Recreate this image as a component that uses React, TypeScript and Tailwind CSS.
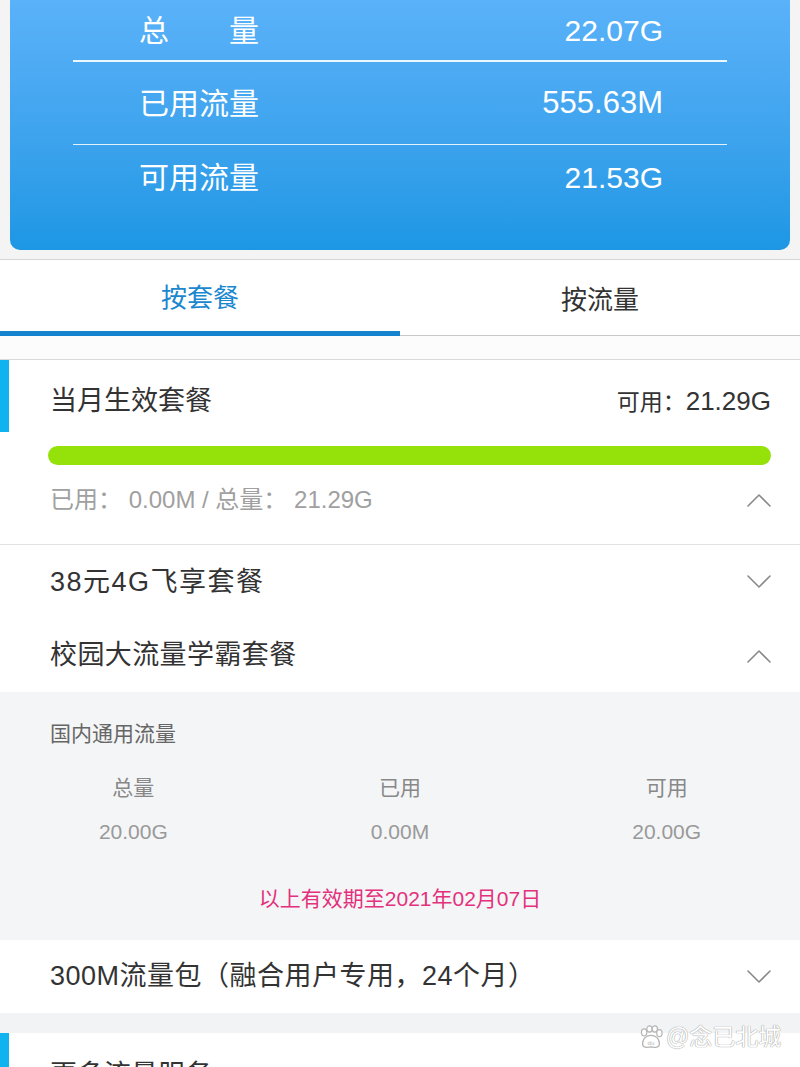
import React from "react";

const font = "font-['Liberation_Sans','Noto_Sans_CJK_SC',sans-serif]";

function Chevron({ up }: { up?: boolean }) {
  return (
    <svg width="24" height="14" viewBox="0 0 24 14" className="shrink-0">
      <polyline
        points={up ? "1,13 12,2 23,13" : "1,1 12,12 23,1"}
        fill="none"
        stroke="#8a8a8a"
        strokeWidth="1.6"
        strokeLinecap="round"
        strokeLinejoin="round"
      />
    </svg>
  );
}

function Paw() {
  return (
    <svg width="26" height="26" viewBox="0 0 34 30" className="shrink-0">
      <g fill="#ffffff" stroke="#b5b5b5" strokeWidth="1.6">
        <ellipse cx="8" cy="9" rx="3.5" ry="4.5" />
        <ellipse cx="15" cy="4.5" rx="3.5" ry="4" />
        <ellipse cx="22" cy="4.5" rx="3.5" ry="4" />
        <ellipse cx="28" cy="10" rx="3.5" ry="4.5" />
        <path d="M6 24 C6 16 12 13 17 13 C22 13 28 16 28 24 C28 29 22 29 17 28 C12 29 6 29 6 24 Z" />
      </g>
      <text x="17" y="25" textAnchor="middle" fontSize="8" fill="#b5b5b5" fontFamily="Liberation Sans, sans-serif">du</text>
    </svg>
  );
}

const summary = [
  { label: "总　　量", value: "22.07G" },
  { label: "已用流量", value: "555.63M" },
  { label: "可用流量", value: "21.53G" },
];

export default function App() {
  return (
    <div className={"relative w-[800px] h-[1067px] overflow-hidden bg-[#f4f4f4] " + font}>
      {/* blue summary card */}
      <div className="mx-[10px] rounded-b-[10px] bg-linear-to-b from-[#5ab2f9] to-[#1c97e4] pb-[41px]">
        <div className="mx-[63px] text-white">
          <div className="flex h-[60px] items-center justify-between pl-[66px] pr-[64px] text-[30px]">
            <span>{summary[0].label}</span>
            <span>{summary[0].value}</span>
          </div>
          <div className="h-[2px] bg-white/90" />
          <div className="flex h-[82px] items-center justify-between pl-[66px] pr-[64px] text-[30px]">
            <span>{summary[1].label}</span>
            <span className="text-[31px]">{summary[1].value}</span>
          </div>
          <div className="h-px bg-white/85" />
          <div className="flex h-[64px] items-center justify-between pl-[66px] pr-[64px] text-[30px]">
            <span>{summary[2].label}</span>
            <span>{summary[2].value}</span>
          </div>
        </div>
      </div>

      {/* tabs */}
      <div className="mt-[9px] flex h-[77px] border-t border-[#d6d6d6] bg-white">
        <div className="flex flex-1 flex-col">
          <div className="flex flex-1 items-center justify-center pt-[6px] text-[26px] text-[#1a87cf]">按套餐</div>
          <div className="h-[5px] bg-[#1683cf]" />
        </div>
        <div className="flex flex-1 flex-col">
          <div className="flex flex-1 items-center justify-center pt-[6px] text-[26px] text-[#333]">按流量</div>
          <div className="h-px bg-[#c8c8c8]" />
        </div>
      </div>
      <div className="h-[24px] border-b border-[#d9d9d9] bg-[#fcfcfc]" />

      {/* current month */}
      <div className="relative border-b border-[#e2e2e2] bg-white pl-[48px] pr-[29px] pt-[25px] pb-[30px]">
        <div className="absolute left-0 top-0 h-[72px] w-[9px] bg-[#0fb3ef]" />
        <div className="flex h-[32px] items-center justify-between">
          <span className="pl-[2px] text-[27px] text-[#333]">当月生效套餐</span>
          <span className="flex items-baseline text-[#333]">
            <span className="text-[23px]">可用：</span>
            <span className="text-[26px]">21.29G</span>
          </span>
        </div>
        <div className="mt-[29px] h-[19px] rounded-full bg-[#95e20b]" />
        <div className="mt-[21px] flex h-[28px] items-center justify-between">
          <span className="pl-[2px] text-[24px] text-[#a0a0a0]">已用： 0.00M / 总量： 21.29G</span>
          <Chevron up />
        </div>
      </div>

      <div className="bg-white pl-[50px] pr-[29px]">
        <div className="flex h-[74px] items-center justify-between">
          <span className="text-[27px] tracking-[1.5px] text-[#333]">38元4G飞享套餐</span>
          <Chevron />
        </div>
        <div className="flex h-[73px] items-center justify-between">
          <span className="text-[27px] tracking-[0.4px] text-[#333]">校园大流量学霸套餐</span>
          <Chevron up />
        </div>
      </div>

      {/* expanded package */}
      <div className="bg-[#f4f5f7] pt-[28px] pb-[27px]">
        <div className="flex h-[28px] items-center pl-[50px] text-[21px] text-[#666]">国内通用流量</div>
        <div className="mt-[26px] grid grid-cols-3 text-center text-[21px]">
          <div className="flex flex-col">
            <span className="h-[28px] leading-[28px] text-[#888]">总量</span>
            <span className="mt-[16px] h-[28px] leading-[28px] text-[#999]">20.00G</span>
          </div>
          <div className="flex flex-col">
            <span className="h-[28px] leading-[28px] text-[#888]">已用</span>
            <span className="mt-[16px] h-[28px] leading-[28px] text-[#999]">0.00M</span>
          </div>
          <div className="flex flex-col">
            <span className="h-[28px] leading-[28px] text-[#888]">可用</span>
            <span className="mt-[16px] h-[28px] leading-[28px] text-[#999]">20.00G</span>
          </div>
        </div>
        <div className="mt-[39px] h-[28px] text-center text-[21px] leading-[28px] text-[#e3317c]">
          以上有效期至2021年02月07日
        </div>
      </div>

      <div className="flex h-[73px] items-center justify-between bg-white pl-[50px] pr-[29px]">
        <span className="text-[27px] tracking-[0.5px] text-[#333]">300M流量包（融合用户专用，24个月）</span>
        <Chevron />
      </div>
      <div className="h-[20px] bg-[#f2f3f5]" />

      {/* more services */}
      <div className="relative h-[120px] bg-white pl-[50px] pt-[22px]">
        <div className="absolute left-0 top-0 h-[72px] w-[9px] bg-[#0fb3ef]" />
        <span className="text-[27px] text-[#333]">更多流量服务</span>
      </div>

      {/* watermark */}
      <div className="absolute left-[638px] top-[1023px] flex items-center gap-[2px] whitespace-nowrap">
        <Paw />
        <span className="text-[23px] leading-[28px] text-white [text-shadow:0_0_1px_#9a9a9a,0_0_1px_#9a9a9a]">@念已北城</span>
      </div>
    </div>
  );
}
